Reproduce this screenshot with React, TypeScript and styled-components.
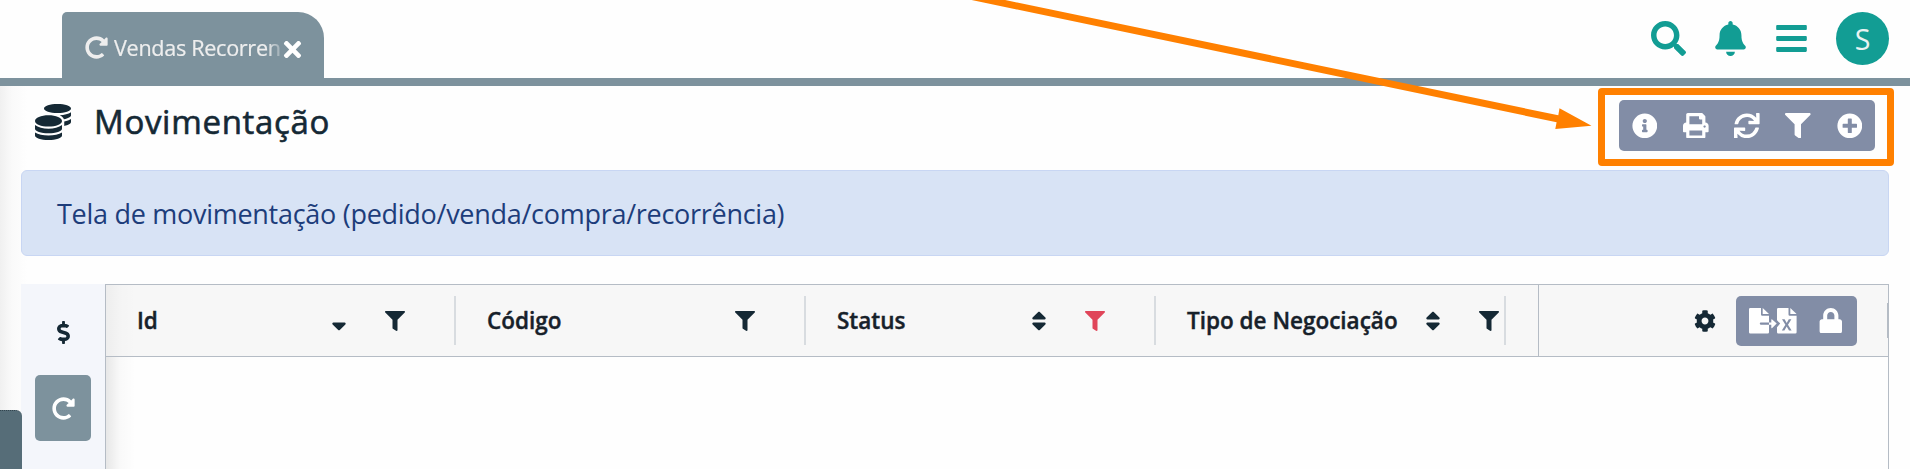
import React from "react";
import styled, { createGlobalStyle } from "styled-components";
import {
  FaBars,
  FaBell,
  FaCog,
  FaCoins,
  FaDollarSign,
  FaFilter,
  FaInfoCircle,
  FaLock,
  FaPlusCircle,
  FaPrint,
  FaRedoAlt,
  FaSearch,
  FaSort,
  FaSortDown,
  FaSync,
  FaTimes,
} from "react-icons/fa";

const slate = "#7d929d";
const teal = "#129d94";
const ink = "#152935";
const action = "#828da6";
const line = "#b5bcc5";
const orange = "#ff8000";

const GlobalStyle = createGlobalStyle`
  *, *::before, *::after { box-sizing: border-box; }
  body {
    margin: 0;
    background: #fefefe;
    color: ${ink};
    font-family: "Open Sans", "Noto Sans", sans-serif;
  }
  svg { display: block; flex: none; }
`;

const Page = styled.div`
  position: relative;
  width: 100%;
  height: 469px;
  overflow: hidden;
  display: flex;
  flex-direction: column;
`;

const TopBar = styled.header`
  height: 86px;
  flex: none;
  display: flex;
  justify-content: space-between;
  align-items: flex-start;
  padding: 12px 21px 0 62px;
  border-bottom: 8px solid ${slate};
`;

const Tab = styled.div`
  width: 262px;
  height: 66px;
  display: flex;
  align-items: center;
  padding: 5px 22px 0 23px;
  background: ${slate};
  color: #eee;
  border-radius: 5px 26px 0 0;
  font-size: 23px;
`;

const TabLabel = styled.span`
  flex: none;
  width: 168px;
  margin: 1px 1px 0 6px;
  white-space: nowrap;
  font-size: 21.6px;
  line-height: 32px;
  letter-spacing: -0.3px;
  -webkit-text-stroke: 0.2px #eee;
  mask-image: linear-gradient(to right, #000 153px, transparent 172px);
`;

const CloseButton = styled.span`
  display: flex;
  padding-top: 4px;
  color: #fff;
  font-size: 25px;
  margin-left: -3px;
`;

const TopActions = styled.nav`
  display: flex;
  align-items: center;
  height: 53px;
  color: ${teal};
  font-size: 35px;
`;

const TopAction = styled.span<{ $gap: number }>`
  display: flex;
  margin-right: ${(p) => p.$gap}px;
`;

const Avatar = styled.span`
  width: 53px;
  height: 53px;
  border-radius: 50%;
  background: ${teal};
  color: #e9f3f2;
  font-size: 28.5px;
  line-height: 55px;
  text-align: center;
`;

const Content = styled.main`
  flex: 1;
  display: flex;
  flex-direction: column;
  padding: 0 21px;
  background: linear-gradient(to right, #f0f0f0 0, #fafafa 12px, #fefefe 27px);
`;

const TitleRow = styled.div`
  height: 84px;
  flex: none;
  display: flex;
  align-items: flex-start;
  padding: 14px 14px 0;
`;

const TitleIcon = styled.span`
  display: flex;
  padding-top: 4px;
  font-size: 36px;
`;

const Title = styled.h1`
  flex: 1;
  margin: 0 0 0 23px;
  font-size: 33px;
  font-weight: 400;
  line-height: 44px;
  letter-spacing: 0.7px;
  -webkit-text-stroke: 0.6px ${ink};
`;

const ButtonGroup = styled.div<{ $height: number }>`
  display: flex;
  height: ${(p) => p.$height}px;
  border-radius: 5px;
  background: ${action};
  color: #fff;
`;

const GroupButton = styled.span<{ $width: number }>`
  width: ${(p) => p.$width}px;
  display: flex;
  align-items: center;
  justify-content: center;
  font-size: 25.6px;
`;

const InfoBox = styled.div`
  height: 86px;
  flex: none;
  padding: 0 35px;
  border: 1px solid #c8d6f3;
  border-radius: 6px;
  background: #d8e3f5;
  color: #1d3d7b;
  font-size: 27px;
  line-height: 86px;
  letter-spacing: -0.28px;
`;

const Workspace = styled.section`
  flex: 1;
  display: flex;
  margin-top: 28px;
`;

const SideTools = styled.aside`
  width: 84px;
  flex: none;
  display: flex;
  flex-direction: column;
  align-items: center;
  gap: 10px;
  padding-top: 15px;
  background: #f4f6fb;
`;

const SideTool = styled.span<{ $active?: boolean }>`
  width: 56px;
  height: 66px;
  display: flex;
  align-items: center;
  justify-content: center;
  border-radius: 5px;
  background: ${(p) => (p.$active ? slate : "transparent")};
  color: ${(p) => (p.$active ? "#fff" : ink)};
  font-size: 23px;
`;

const Grid = styled.div`
  flex: 1;
  border: 1px solid ${line};
  border-bottom: 0;
  background: linear-gradient(to right, rgba(0, 0, 0, 0.09), rgba(0, 0, 0, 0.02) 14px, transparent 30px);
`;

const GridHead = styled.div`
  height: 72px;
  display: flex;
  align-items: center;
  border-bottom: 1px solid ${line};
  background: linear-gradient(to right, rgba(0, 0, 0, 0.04), rgba(0, 0, 0, 0.01) 14px, transparent 30px), #f7f7f7;
`;

const Column = styled.div<{ $last?: boolean }>`
  width: 350px;
  height: 49px;
  flex: none;
  display: flex;
  align-items: center;
  padding: 0 ${(p) => (p.$last ? 5 : 49)}px 0 31px;
  border-right: 2px solid #d8dce0;
  color: ${ink};
`;

const ColumnName = styled.span`
  flex: 1;
  padding-top: 1px;
  color: #17212a;
  font-size: 22.5px;
  font-weight: 600;
  line-height: 32px;
  white-space: nowrap;
  -webkit-text-stroke: 0.4px #17212a;
`;

const SortIcon = styled.span`
  display: flex;
  margin-right: 34px;
  font-size: 24px;
`;

const FilterIcon = styled.span<{ $active?: boolean }>`
  display: flex;
  font-size: 20px;
  color: ${(p) => (p.$active ? "#e0465a" : ink)};
`;

const ActionsColumn = styled.div`
  flex: 1;
  height: 71px;
  display: flex;
  align-items: center;
  justify-content: flex-end;
  margin-left: 32px;
  border-left: 1px solid ${line};
  font-size: 22px;
`;

const GridActions = styled(ButtonGroup)`
  margin-left: 20px;
  margin-right: 30px;
  padding: 0 1px 0 4px;
`;

const ResizeHandle = styled.span`
  width: 1px;
  height: 35px;
  background: ${line};
`;

const Drawer = styled.div`
  position: absolute;
  left: 0;
  bottom: 0;
  width: 22px;
  height: 59px;
  border-top: 1px dotted #33454f;
  border-radius: 0 6px 0 0;
  background: #566d78;
`;

const Highlight = styled.div`
  position: absolute;
  left: 1598px;
  top: 88px;
  width: 296px;
  height: 78px;
  border: 7px solid ${orange};
  border-radius: 4px;
`;

const Arrow = styled.svg`
  position: absolute;
  left: 0;
  top: 0;
`;

const ExportIcon = () => (
  <svg width="48" height="26" viewBox="0 0 48 26" fill="#fff">
    <path d="M1.3 0H12v6.5q0 1.2 1.2 1.2H20v6.8h-8.3q-.9 0-.9 1.1t.9 1.1H20v7.6q0 1.3-1.3 1.3H1.3Q0 25.6 0 24.3V1.3Q0 0 1.3 0Z" />
    <path d="M13.7 0 20 6.1H13.7Z" />
    <path d="M20 14.5h2.3v-2.6q0-1.2.9-.4l4.5 4.1-4.5 4.3q-.9.8-.9-.4v-2.8H20Z" />
    <path
      fillRule="evenodd"
      d="M29.3 0H39.5v6.5q0 1.2 1.2 1.2H47.6v16.6q0 1.3-1.3 1.3H29.3Q28 25.6 28 24.3V19.2l3.2-3.6L28 12.3V1.3Q28 0 29.3 0ZM33 11.3l3.4 5.5-3.6 5.6h2.6l2.3-3.8 2.3 3.8h2.6L39 16.8l3.4-5.5h-2.6l-2.1 3.6-2.1-3.6Z"
    />
    <path d="M41.3 0 47.6 6.1H41.3Z" />
  </svg>
);

type ColumnInfo = { name: string; sort?: "both" | "down"; filtered?: boolean };

const columns: ColumnInfo[] = [
  { name: "Id", sort: "down" },
  { name: "Código" },
  { name: "Status", sort: "both", filtered: true },
  { name: "Tipo de Negociação", sort: "both" },
];

const toolbar = [FaInfoCircle, FaPrint, FaSync, FaFilter, FaPlusCircle];

export default function App() {
  return (
    <Page>
      <GlobalStyle />
      <TopBar>
        <Tab>
          <FaRedoAlt />
          <TabLabel>Vendas Recorren</TabLabel>
          <CloseButton>
            <FaTimes />
          </CloseButton>
        </Tab>
        <TopActions>
          <TopAction $gap={27}>
            <FaSearch />
          </TopAction>
          <TopAction $gap={26}>
            <FaBell />
          </TopAction>
          <TopAction $gap={27}>
            <FaBars />
          </TopAction>
          <Avatar>S</Avatar>
        </TopActions>
      </TopBar>

      <Content>
        <TitleRow>
          <TitleIcon>
            <FaCoins />
          </TitleIcon>
          <Title>Movimentação</Title>
          <ButtonGroup $height={51}>
            {toolbar.map((Icon, i) => (
              <GroupButton key={i} $width={51.2}>
                <Icon />
              </GroupButton>
            ))}
          </ButtonGroup>
        </TitleRow>

        <InfoBox>Tela de movimentação (pedido/venda/compra/recorrência)</InfoBox>

        <Workspace>
          <SideTools>
            <SideTool>
              <FaDollarSign />
            </SideTool>
            <SideTool $active>
              <FaRedoAlt />
            </SideTool>
          </SideTools>
          <Grid>
            <GridHead>
              {columns.map((column, i) => (
                <Column key={column.name} $last={i === columns.length - 1}>
                  <ColumnName>{column.name}</ColumnName>
                  {column.sort && (
                    <SortIcon>{column.sort === "down" ? <FaSortDown /> : <FaSort />}</SortIcon>
                  )}
                  <FilterIcon $active={column.filtered}>
                    <FaFilter />
                  </FilterIcon>
                </Column>
              ))}
              <ActionsColumn>
                <FaCog />
                <GridActions $height={50}>
                  <GroupButton $width={65}>
                    <ExportIcon />
                  </GroupButton>
                  <GroupButton $width={51}>
                    <FaLock />
                  </GroupButton>
                </GridActions>
                <ResizeHandle />
              </ActionsColumn>
            </GridHead>
          </Grid>
        </Workspace>
      </Content>

      <Drawer />
      <Arrow width="1600" height="140" viewBox="0 0 1600 140">
        <path d="M971.6 0H1005.2L1558.3 115.3L1559.5 108.3L1591.5 125.7L1555.3 129L1556.6 122.2Z" fill={orange} />
      </Arrow>
      <Highlight />
    </Page>
  );
}
